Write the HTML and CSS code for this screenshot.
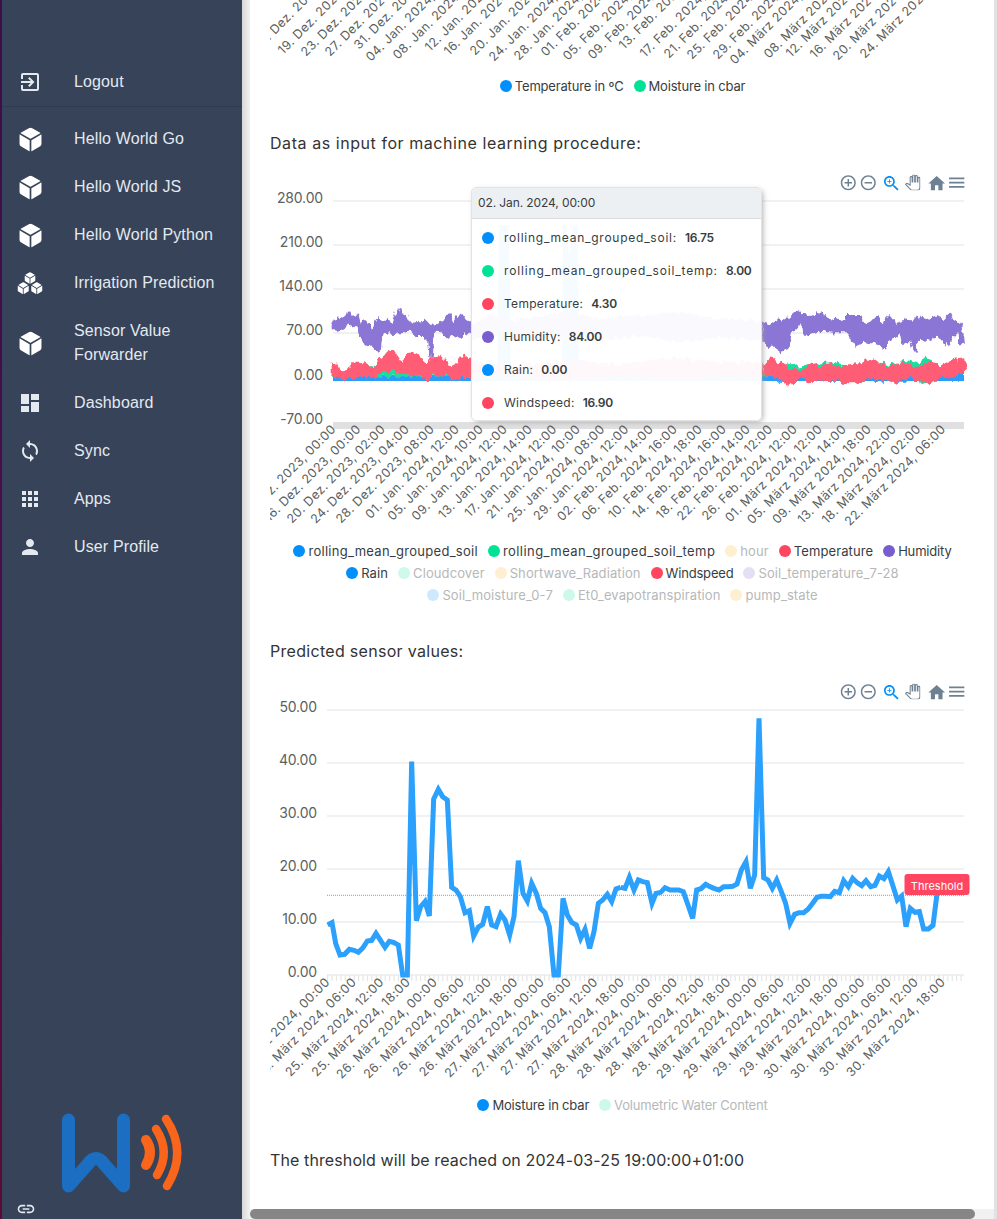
FILE: index.html
```html
<!DOCTYPE html>
<html>
<head>
  <title>Irrigation Prediction</title>
  <link rel="stylesheet" href="styles.css">
</head>
<body>
  <svg class="icon-defs" xmlns="http://www.w3.org/2000/svg">
    <symbol id="i-cube" viewBox="0 0 512 512"><path d="M440.9 136.3a4 4 0 000-6.91L288.16 40.65a64.14 64.14 0 00-64.33 0L71.12 129.39a4 4 0 000 6.91L254 243.88a4 4 0 004.06 0zM54 163.51a4 4 0 00-6 3.49v173.89a48 48 0 0023.84 41.39L234 479.51a4 4 0 006-3.46V274.3a4 4 0 00-2-3.46zM272 275v201a4 4 0 006 3.46l162.15-97.23A48 48 0 00464 340.89V167a4 4 0 00-6-3.45l-184 108a4 4 0 00-2 3.45z"/></symbol>
    <symbol id="t-plus" viewBox="0 0 24 24"><path d="M13 7h-2v4H7v2h4v4h2v-4h4v-2h-4V7zm-1-5C6.48 2 2 6.48 2 12s4.48 10 10 10 10-4.48 10-10S17.52 2 12 2zm0 18c-4.41 0-8-3.59-8-8s3.59-8 8-8 8 3.59 8 8-3.59 8-8 8z"/></symbol>
    <symbol id="t-minus" viewBox="0 0 24 24"><path d="M7 11v2h10v-2H7zm5-9C6.48 2 2 6.48 2 12s4.48 10 10 10 10-4.48 10-10S17.52 2 12 2zm0 18c-4.41 0-8-3.59-8-8s3.59-8 8-8 8 3.59 8 8-3.59 8-8 8z"/></symbol>
    <symbol id="t-lens" viewBox="0 0 24 24"><path d="M15.5 14h-.79l-.28-.27C15.41 12.59 16 11.11 16 9.5 16 5.91 13.09 3 9.5 3S3 5.91 3 9.5 5.91 16 9.5 16c1.61 0 3.09-.59 4.23-1.57l.27.28v.79l5 4.99L20.49 19l-4.99-5zm-6 0C7.01 14 5 11.99 5 9.5S7.01 5 9.5 5 14 7.01 14 9.5 11.99 14 9.5 14z"/><path d="M12 10h-2v2H9v-2H7V9h2V7h1v2h2v1z"/></symbol>
    <symbol id="t-hand" viewBox="0 0 24 24"><path class="hand" d="M23 5.5V20c0 2.2-1.8 4-4 4h-7.3c-1.08 0-2.1-.43-2.85-1.19L1 14.83s1.26-1.23 1.3-1.25c.22-.19.49-.29.79-.29.22 0 .42.06.6.16.04.01 4.31 2.46 4.31 2.46V4c0-.83.67-1.5 1.5-1.5S11 3.17 11 4v7h1V1.5c0-.83.67-1.5 1.5-1.5S15 .67 15 1.5V11h1V2.5c0-.83.67-1.5 1.5-1.5s1.5.67 1.5 1.5V11h1V5.5c0-.83.67-1.5 1.5-1.5s1.5.67 1.5 1.5z"/></symbol>
    <symbol id="t-home" viewBox="0 0 24 24"><path d="M10 20v-6h4v6h5v-8h3L12 3 2 12h3v8z"/></symbol>
    <symbol id="t-menu" viewBox="0 0 24 24"><path d="M3 18h18v-2H3v2zm0-5h18v-2H3v2zm0-7v2h18V6H3z"/></symbol>
    <g id="chart-toolbar" class="toolbar">
      <use href="#t-plus" x="839.3" y="173.7" width="18" height="18"/>
      <use href="#t-minus" x="859.3" y="173.7" width="18" height="18"/>
      <use href="#t-lens" class="toolbar-active" x="881.5" y="173.5" width="20" height="20"/>
      <use href="#t-hand" x="905" y="174.8" width="15.5" height="15.5"/>
      <use href="#t-home" x="926.7" y="173.5" width="20" height="20"/>
      <use href="#t-menu" x="946.5" y="172.5" width="20.4" height="20.4"/>
    </g>
  </svg>

  <div class="page">
    <div class="rail"></div>

    <aside class="sidebar">
      <nav class="nav-top">
        <a class="nav-item">
          <span class="nav-icon"><svg width="24" height="24" viewBox="0 0 24 24"><path d="M10.09 15.59L11.5 17l5-5-5-5-1.41 1.41L12.67 11H3v2h9.67l-2.58 2.59zM19 3H5c-1.11 0-2 .9-2 2v4h2V5h14v14H5v-4H3v4c0 1.1.89 2 2 2h14c1.1 0 2-.9 2-2V5c0-1.1-.9-2-2-2z"/></svg></span>
          <span class="nav-label">Logout</span>
        </a>
      </nav>
      <nav class="nav-list">
        <a class="nav-item">
          <span class="nav-icon cube"><svg width="27" height="27"><use href="#i-cube"/></svg></span>
          <span class="nav-label">Hello World Go</span>
        </a>
        <a class="nav-item">
          <span class="nav-icon cube"><svg width="27" height="27"><use href="#i-cube"/></svg></span>
          <span class="nav-label">Hello World JS</span>
        </a>
        <a class="nav-item">
          <span class="nav-icon cube"><svg width="27" height="27"><use href="#i-cube"/></svg></span>
          <span class="nav-label">Hello World Python</span>
        </a>
        <a class="nav-item">
          <span class="nav-icon cube"><svg width="26" height="22" viewBox="0 0 26 22"><use href="#i-cube" x="6.5" y="-.5" width="13" height="13"/><use href="#i-cube" x="-.5" y="9.5" width="13.5" height="13.5"/><use href="#i-cube" x="13" y="9.5" width="13.5" height="13.5"/></svg></span>
          <span class="nav-label">Irrigation Prediction</span>
        </a>
        <a class="nav-item">
          <span class="nav-icon cube"><svg width="27" height="27"><use href="#i-cube"/></svg></span>
          <span class="nav-label">Sensor Value Forwarder</span>
        </a>
        <a class="nav-item">
          <span class="nav-icon"><svg width="24" height="24" viewBox="0 0 24 24"><path d="M3 13h8V3H3v10zm0 8h8v-6H3v6zm10 0h8V11h-8v10zm0-18v6h8V3h-8z"/></svg></span>
          <span class="nav-label">Dashboard</span>
        </a>
        <a class="nav-item">
          <span class="nav-icon"><svg width="24" height="24" viewBox="0 0 24 24"><path d="M12 4V1L8 5l4 4V6c3.31 0 6 2.69 6 6 0 1.01-.25 1.97-.7 2.8l1.46 1.46C19.54 15.03 20 13.57 20 12c0-4.42-3.58-8-8-8zm0 14c-3.31 0-6-2.69-6-6 0-1.01.25-1.97.7-2.8L5.24 7.74C4.46 8.97 4 10.43 4 12c0 4.42 3.58 8 8 8v3l4-4-4-4v3z"/></svg></span>
          <span class="nav-label">Sync</span>
        </a>
        <a class="nav-item">
          <span class="nav-icon"><svg width="24" height="24" viewBox="0 0 24 24"><path d="M4 8h4V4H4v4zm6 12h4v-4h-4v4zm-6 0h4v-4H4v4zm0-6h4v-4H4v4zm6 0h4v-4h-4v4zm6-10v4h4V4h-4zm-6 4h4V4h-4v4zm6 6h4v-4h-4v4zm0 6h4v-4h-4v4z"/></svg></span>
          <span class="nav-label">Apps</span>
        </a>
        <a class="nav-item">
          <span class="nav-icon"><svg width="24" height="24" viewBox="0 0 24 24"><path d="M12 12c2.21 0 4-1.79 4-4s-1.79-4-4-4-4 1.79-4 4 1.79 4 4 4zm0 2c-2.67 0-8 1.34-8 4v2h16v-2c0-2.66-5.33-4-8-4z"/></svg></span>
          <span class="nav-label">User Profile</span>
        </a>
      </nav>

      <div class="side-foot">
        <svg class="logo" width="126" height="80" viewBox="0 0 126 80">
          <path class="logo-w" d="M7.5 7V73L27 51Q35 40 43 51L62.5 73V7"/>
          <path class="logo-wave" d="M85 27Q93 39 85 52" stroke-width="10"/>
          <path class="logo-wave" d="M95 16Q110 39 96 62" stroke-width="8.5"/>
          <path class="logo-wave" d="M105 6Q127 39 106 73" stroke-width="8.5"/>
        </svg>
        <svg class="link-icon" width="20" height="20" viewBox="0 0 24 24"><path d="M3.9 12c0-1.71 1.39-3.1 3.1-3.1h4V7H7c-2.76 0-5 2.24-5 5s2.24 5 5 5h4v-1.9H7c-1.71 0-3.1-1.39-3.1-3.1zM8 13h8v-2H8v2zm9-6h-4v1.9h4c1.71 0 3.1 1.39 3.1 3.1s-1.39 3.1-3.1 3.1h-4V17h4c2.76 0 5-2.24 5-5s-2.24-5-5-5z"/></svg>
      </div>
    </aside>

    <div class="gutter"></div>

    <main class="main">
      <div class="content">
        <!-- first chart, scrolled so only the end of its axis shows -->
        <svg class="chart" width="705" height="70" viewBox="270 0 705 70">
          <g class="x-labels">
            <text transform="translate(260 50) rotate(-45)">15. Dez. 2023, 00:00</text>
            <text transform="translate(283 55) rotate(-45)">19. Dez. 2023, 00:00</text>
            <text transform="translate(306 57) rotate(-45)">23. Dez. 2023, 00:00</text>
            <text transform="translate(330 57) rotate(-45)">27. Dez. 2023, 00:00</text>
            <text transform="translate(359 50) rotate(-45)">31. Dez. 2023, 00:00</text>
            <text transform="translate(371 62) rotate(-45)">04. Jan. 2024, 00:00</text>
            <text transform="translate(398 60) rotate(-45)">08. Jan. 2024, 00:00</text>
            <text transform="translate(430 52) rotate(-45)">12. Jan. 2024, 00:00</text>
            <text transform="translate(449 56) rotate(-45)">16. Jan. 2024, 00:00</text>
            <text transform="translate(475 56) rotate(-45)">20. Jan. 2024, 00:00</text>
            <text transform="translate(494 62) rotate(-45)">24. Jan. 2024, 00:00</text>
            <text transform="translate(519 61) rotate(-45)">28. Jan. 2024, 00:00</text>
            <text transform="translate(546 57) rotate(-45)">01. Feb. 2024, 00:00</text>
            <text transform="translate(568 61) rotate(-45)">05. Feb. 2024, 00:00</text>
            <text transform="translate(593 60) rotate(-45)">09. Feb. 2024, 00:00</text>
            <text transform="translate(624 50) rotate(-45)">13. Feb. 2024, 00:00</text>
            <text transform="translate(645 58) rotate(-45)">17. Feb. 2024, 00:00</text>
            <text transform="translate(669 59) rotate(-45)">21. Feb. 2024, 00:00</text>
            <text transform="translate(692 60) rotate(-45)">25. Feb. 2024, 00:00</text>
            <text transform="translate(718 60) rotate(-45)">29. Feb. 2024, 00:00</text>
            <text transform="translate(735 65) rotate(-45)">04. März 2024, 00:00</text>
            <text transform="translate(769 59) rotate(-45)">08. März 2024, 00:00</text>
            <text transform="translate(791 58) rotate(-45)">12. März 2024, 00:00</text>
            <text transform="translate(815 59) rotate(-45)">16. März 2024, 00:00</text>
            <text transform="translate(838 61) rotate(-45)">20. März 2024, 00:00</text>
            <text transform="translate(865 59) rotate(-45)">24. März 2024, 00:00</text>
          </g>
        </svg>
        <div class="legend legend-gap">
          <div class="legend-row">
            <span class="legend-item tight"><i class="dot blue"></i>Temperature in ºC</span>
            <span class="legend-item tight"><i class="dot green"></i>Moisture in cbar</span>
          </div>
        </div>

        <h2 class="chart-title title-first">Data as input for machine learning procedure:</h2>
        <div class="chart-box">
          <svg class="chart" width="705" height="375" viewBox="270 165 705 375">
            <defs>
              <filter id="jag" x="-2%" y="-10%" width="104%" height="120%">
                <feTurbulence type="fractalNoise" baseFrequency=".22 .08" numOctaves="2" seed="4"/>
                <feDisplacementMap in="SourceGraphic" scale="9" xChannelSelector="G" yChannelSelector="R"/>
              </filter>
            </defs>
            <use href="#chart-toolbar"/>
            <g class="grid">
              <line x1="333" y1="201" x2="964" y2="201"/>
              <line x1="333" y1="245" x2="964" y2="245"/>
              <line x1="333" y1="289" x2="964" y2="289"/>
              <line x1="333" y1="333" x2="964" y2="333"/>
              <line x1="333" y1="377" x2="964" y2="377"/>
            </g>
            <line class="axis-solid" x1="333" y1="425.5" x2="964" y2="425.5"/>
            <g class="y-labels">
              <text x="323" y="203">280.00</text>
              <text x="323" y="247">210.00</text>
              <text x="323" y="291">140.00</text>
              <text x="323" y="335">70.00</text>
              <text x="323" y="380">0.00</text>
              <text x="323" y="424">-70.00</text>
            </g>
            <!-- series traced from the plot, drawn in 3x units -->
            <rect class="s-blue" x="333" y="375" width="631" height="6"/>
            <polygon class="s-blue" points="497,377 499,225 509,225 511,377"/>
            <polygon class="s-blue" points="562,377 563,225 567,225 569,260 573,225 578,225 579,377"/>
            <g filter="url(#jag)">
              <polygon class="s-purple" points="470,325 490,315 520,320 560,312 600,318 640,315 680,312 720,318 762,322 762,340 720,338 680,342 640,336 600,340 560,338 520,342 490,336 470,340"/>
              <polygon class="s-red" points="470,362 520,366 570,360 620,364 670,358 720,362 762,362 762,378 720,376 670,380 620,376 570,381 520,376 470,378"/>
              <g transform="translate(260 170) scale(.33333)">
                <polygon class="s-green" points="215,610 330,585 350,590 410,600 480,600 540,590 634,595 634,620 215,620"/>
                <polygon class="s-purple" points="215,465 228,437 240,442 255,432 270,424 280,440 298,430 305,455 322,450 335,490 355,435 370,445 395,455 413,412 425,435 440,428 455,458 470,455 485,462 500,450 515,465 530,462 548,450 568,432 580,460 600,430 615,450 634,465 634,497 615,490 600,505 585,495 565,505 545,490 525,488 520,500 515,562 508,565 505,515 490,498 470,498 450,480 425,488 405,492 390,490 368,492 362,545 345,542 325,520 300,500 290,470 270,465 250,475 230,482 215,478"/>
                <polygon class="s-red" points="215,575 228,578 235,600 255,595 270,590 285,575 300,575 320,585 345,590 355,575 370,552 385,548 400,538 415,560 425,575 445,552 465,550 485,562 500,585 515,560 535,552 555,570 570,590 590,580 610,552 634,570 634,620 600,622 575,632 560,615 540,622 515,615 500,638 485,615 460,618 440,612 420,612 395,605 370,605 345,622 320,622 295,622 265,620 258,638 240,625 215,618"/>
              </g>
              <g transform="translate(620 170) scale(.33333)">
                <polygon class="s-blue" points="427,615 900,615 930,590 960,585 1032,580 1032,632 427,632"/>
                <polygon class="s-green" points="427,600 500,585 510,578 530,590 640,575 660,582 690,590 790,578 830,585 850,570 870,572 890,580 900,570 918,560 940,570 940,600 920,640 900,645 890,620 427,620"/>
                <polygon class="s-purple" points="427,455 445,465 470,445 490,455 510,440 530,422 550,428 565,438 585,435 605,422 625,440 650,445 670,460 675,435 720,435 735,460 770,442 785,460 805,432 830,462 860,448 880,455 897,430 915,450 945,438 970,450 992,428 1005,458 1025,458 1038,518 1020,520 1015,490 990,510 975,530 950,500 920,515 895,512 890,550 870,520 845,522 840,490 815,510 800,540 775,525 735,515 705,530 680,490 640,490 600,482 570,497 550,497 545,460 515,490 510,520 490,548 465,530 440,530 427,510"/>
                <polygon class="s-red" points="427,580 440,575 458,560 470,580 485,572 500,590 530,600 560,595 580,580 600,592 630,575 650,590 690,582 720,580 760,565 780,580 820,590 850,575 880,590 905,590 930,572 960,585 1000,570 1032,565 1038,600 1020,610 990,625 950,630 925,640 890,635 860,620 815,640 780,625 745,625 700,640 680,640 640,630 605,635 565,640 540,625 505,648 480,625 450,620 427,615"/>
              </g>
            </g>
            <g class="x-labels end">
              <text transform="translate(336.6 430) rotate(-45)">12. Dez. 2023, 00:00</text>
              <text transform="translate(361.5 430) rotate(-45)">16. Dez. 2023, 00:00</text>
              <text transform="translate(386 430) rotate(-45)">20. Dez. 2023, 02:00</text>
              <text transform="translate(410 430) rotate(-45)">24. Dez. 2023, 04:00</text>
              <text transform="translate(435 430) rotate(-45)">28. Dez. 2023, 08:00</text>
              <text transform="translate(460 430) rotate(-45)">01. Jan. 2024, 12:00</text>
              <text transform="translate(484 430) rotate(-45)">05. Jan. 2024, 10:00</text>
              <text transform="translate(508 430) rotate(-45)">09. Jan. 2024, 12:00</text>
              <text transform="translate(533 430) rotate(-45)">13. Jan. 2024, 14:00</text>
              <text transform="translate(557.6 430) rotate(-45)">17. Jan. 2024, 12:00</text>
              <text transform="translate(581 430) rotate(-45)">21. Jan. 2024, 10:00</text>
              <text transform="translate(605.5 430) rotate(-45)">25. Jan. 2024, 08:00</text>
              <text transform="translate(629.5 430) rotate(-45)">29. Jan. 2024, 12:00</text>
              <text transform="translate(654 430) rotate(-45)">02. Feb. 2024, 14:00</text>
              <text transform="translate(678 430) rotate(-45)">06. Feb. 2024, 16:00</text>
              <text transform="translate(703 430) rotate(-45)">10. Feb. 2024, 18:00</text>
              <text transform="translate(727 430) rotate(-45)">14. Feb. 2024, 16:00</text>
              <text transform="translate(751 430) rotate(-45)">18. Feb. 2024, 14:00</text>
              <text transform="translate(773.4 430) rotate(-45)">22. Feb. 2024, 12:00</text>
              <text transform="translate(798 430) rotate(-45)">26. Feb. 2024, 12:00</text>
              <text transform="translate(823 430) rotate(-45)">01. März 2024, 12:00</text>
              <text transform="translate(847 430) rotate(-45)">05. März 2024, 14:00</text>
              <text transform="translate(872 430) rotate(-45)">09. März 2024, 18:00</text>
              <text transform="translate(897 430) rotate(-45)">13. März 2024, 22:00</text>
              <text transform="translate(921.5 430) rotate(-45)">18. März 2024, 02:00</text>
              <text transform="translate(946.4 430) rotate(-45)">22. März 2024, 06:00</text>
            </g>
          </svg>

          <div class="tooltip">
            <div class="tooltip-title">02. Jan. 2024, 00:00</div>
            <div class="tooltip-body">
              <div class="tooltip-row wide"><i class="dot big blue"></i><span>rolling_mean_grouped_soil:</span><b>16.75</b></div>
              <div class="tooltip-row wider"><i class="dot big green"></i><span>rolling_mean_grouped_soil_temp:</span><b>8.00</b></div>
              <div class="tooltip-row"><i class="dot big red"></i><span>Temperature:</span><b>4.30</b></div>
              <div class="tooltip-row"><i class="dot big purple"></i><span>Humidity:</span><b>84.00</b></div>
              <div class="tooltip-row"><i class="dot big blue"></i><span>Rain:</span><b>0.00</b></div>
              <div class="tooltip-row"><i class="dot big red"></i><span>Windspeed:</span><b>16.90</b></div>
            </div>
          </div>
        </div>
        <div class="legend">
          <div class="legend-row">
            <span class="legend-item wide"><i class="dot blue"></i>rolling_mean_grouped_soil</span>
            <span class="legend-item wider"><i class="dot green"></i>rolling_mean_grouped_soil_temp</span>
            <span class="legend-item off"><i class="dot amber"></i>hour</span>
            <span class="legend-item"><i class="dot red"></i>Temperature</span>
            <span class="legend-item tight"><i class="dot purple"></i>Humidity</span>
          </div>
          <div class="legend-row">
            <span class="legend-item"><i class="dot blue"></i>Rain</span>
            <span class="legend-item off"><i class="dot green"></i>Cloudcover</span>
            <span class="legend-item off"><i class="dot amber"></i>Shortwave_Radiation</span>
            <span class="legend-item tight"><i class="dot red"></i>Windspeed</span>
            <span class="legend-item off"><i class="dot purple"></i>Soil_temperature_7-28</span>
          </div>
          <div class="legend-row">
            <span class="legend-item off"><i class="dot blue"></i>Soil_moisture_0-7</span>
            <span class="legend-item off"><i class="dot green"></i>Et0_evapotranspiration</span>
            <span class="legend-item off"><i class="dot amber"></i>pump_state</span>
          </div>
        </div>

        <h2 class="chart-title title-second">Predicted sensor values:</h2>
        <svg class="chart" width="705" height="419" viewBox="270 675 705 419">
          <use href="#chart-toolbar" y="509"/>
          <g class="grid">
            <line x1="327" y1="710" x2="964" y2="710"/>
            <line x1="327" y1="763" x2="964" y2="763"/>
            <line x1="327" y1="816" x2="964" y2="816"/>
            <line x1="327" y1="869" x2="964" y2="869"/>
            <line x1="327" y1="922" x2="964" y2="922"/>
            <line x1="327" y1="975" x2="964" y2="975"/>
          </g>
          <line class="axis-ticks" x1="327" y1="978" x2="964" y2="978"/>
          <g class="y-labels">
            <text x="317" y="712">50.00</text>
            <text x="317" y="765">40.00</text>
            <text x="317" y="818">30.00</text>
            <text x="317" y="871">20.00</text>
            <text x="317" y="924">10.00</text>
            <text x="317" y="977">0.00</text>
          </g>
          <line class="threshold-line" x1="327" y1="895.3" x2="964" y2="895.3"/>
          <g transform="translate(260 690) scale(.33333)">
            <polyline class="series-line" points="203,705 216,698 227,760 240,795 254,793 268,778 282,781 295,787 309,773 322,753 335,751 348,730 362,752 375,772 388,754 402,758 415,765 428,855 442,855 455,215 469,692 482,650 495,635 508,678 521,327 535,298 548,320 562,330 575,592 588,600 601,620 615,668 628,662 641,738 655,711 668,703 682,650 695,705 708,710 722,672 735,690 749,735 762,680 775,512 789,610 802,633 815,580 829,610 842,655 855,668 868,710 882,855 895,855 909,625 922,675 935,697 949,705 962,745 975,718 989,775 1002,725 1015,640 1028,630 1042,613 1055,635 1068,597 1082,592"/>
          </g>
          <g transform="translate(620 690) scale(.33333)">
            <polyline class="series-line" points="2,592 15,595 28,562 42,600 55,570 68,575 82,578 96,640 108,610 122,607 135,593 150,600 163,600 176,600 190,605 204,645 218,685 230,600 243,596 257,583 270,590 284,596 297,600 311,590 324,590 338,589 351,582 364,540 378,515 391,595 404,555 417,85 431,563 444,570 457,595 470,570 484,605 497,640 510,700 524,673 537,668 551,668 564,658 578,640 591,622 604,619 617,619 631,620 644,604 658,608 671,572 685,590 698,565 711,578 725,587 738,572 752,590 765,586 778,558 792,566 805,545 818,585 832,630 845,618 858,710 871,655 885,667 898,665 911,717 925,717 939,706 950,620 955,570"/>
          </g>
          <g class="threshold-label">
            <rect x="904.5" y="874" width="65" height="21" rx="3"/>
            <text x="937" y="890">Threshold</text>
          </g>
          <g class="x-labels end">
            <text transform="translate(330.5 983) rotate(-45)">25. März 2024, 00:00</text>
            <text transform="translate(357 983) rotate(-45)">25. März 2024, 06:00</text>
            <text transform="translate(384.6 983) rotate(-45)">25. März 2024, 12:00</text>
            <text transform="translate(411 983) rotate(-45)">25. März 2024, 18:00</text>
            <text transform="translate(438 983) rotate(-45)">26. März 2024, 00:00</text>
            <text transform="translate(465 983) rotate(-45)">26. März 2024, 06:00</text>
            <text transform="translate(492 983) rotate(-45)">26. März 2024, 12:00</text>
            <text transform="translate(518.6 983) rotate(-45)">26. März 2024, 18:00</text>
            <text transform="translate(545 983) rotate(-45)">27. März 2024, 00:00</text>
            <text transform="translate(572 983) rotate(-45)">27. März 2024, 06:00</text>
            <text transform="translate(598.5 983) rotate(-45)">27. März 2024, 12:00</text>
            <text transform="translate(625 983) rotate(-45)">27. März 2024, 18:00</text>
            <text transform="translate(651.6 983) rotate(-45)">28. März 2024, 00:00</text>
            <text transform="translate(678.4 983) rotate(-45)">28. März 2024, 06:00</text>
            <text transform="translate(705 983) rotate(-45)">28. März 2024, 12:00</text>
            <text transform="translate(731.6 983) rotate(-45)">28. März 2024, 18:00</text>
            <text transform="translate(758 983) rotate(-45)">29. März 2024, 00:00</text>
            <text transform="translate(785 983) rotate(-45)">29. März 2024, 06:00</text>
            <text transform="translate(812 983) rotate(-45)">29. März 2024, 12:00</text>
            <text transform="translate(839 983) rotate(-45)">29. März 2024, 18:00</text>
            <text transform="translate(865.5 983) rotate(-45)">30. März 2024, 00:00</text>
            <text transform="translate(892 983) rotate(-45)">30. März 2024, 06:00</text>
            <text transform="translate(919 983) rotate(-45)">30. März 2024, 12:00</text>
            <text transform="translate(946 983) rotate(-45)">30. März 2024, 18:00</text>
          </g>
        </svg>
        <div class="legend">
          <div class="legend-row">
            <span class="legend-item tight"><i class="dot blue"></i>Moisture in cbar</span>
            <span class="legend-item tight off"><i class="dot green"></i>Volumetric Water Content</span>
          </div>
        </div>

        <p class="result">The threshold will be reached on 2024-03-25 19:00:00+01:00</p>
      </div>

      <div class="hscroll"><div class="hscroll-thumb"></div></div>
    </main>

    <div class="edge"></div>
  </div>
</body>
</html>
```

FILE: styles.css
```css
body {
  margin: 0;
  font-family: "Inter", "Liberation Sans", sans-serif;
  color: #373d3f;
  background: #fff;
}

.icon-defs {
  display: none;
}

.page {
  display: flex;
  height: 1219px;
  overflow: hidden;
}

.rail {
  width: 2px;
  background: linear-gradient(#3a1046, #4a0d4a 50%, #5c0a35);
}

/* sidebar */
.sidebar {
  width: 240px;
  display: flex;
  flex-direction: column;
  background: #364359;
  font-family: "Liberation Sans", Arial, sans-serif;
}

.nav-top {
  padding-top: 58px;
  border-bottom: 1px solid #2f3b50;
}

.nav-list {
  padding-top: 8px;
}

.nav-item {
  display: flex;
  align-items: center;
  padding: 12px 0 12px 14px;
  color: #e4e9f0;
  font-size: 16px;
  line-height: 24px;
  letter-spacing: .13px;
}

.nav-icon {
  width: 28px;
  display: flex;
  justify-content: center;
  margin-right: 30px;
  fill: #e4e9f0;
}

.nav-icon svg {
  margin: -4px 0;
}

.nav-icon.cube {
  fill: #fff;
}

.nav-label {
  max-width: 150px;
}

.side-foot {
  margin-top: auto;
  padding: 0 0 0 59px;
  display: flex;
  flex-direction: column;
}

.logo {
  fill: none;
  stroke-linecap: round;
  stroke-linejoin: round;
}

.logo-w {
  stroke: #1b6ec2;
  stroke-width: 13;
}

.logo-wave {
  stroke: #f9651a;
}

.link-icon {
  fill: #e4e9f0;
  margin: 6px 0 0 -45px;
}

.gutter {
  width: 8px;
  background: linear-gradient(90deg, #d8d8d8, #f2f2f2);
}

.edge {
  width: 3px;
  background: #e2e2e2;
}

/* main column */
.main {
  flex: 1;
  position: relative;
  background: #fff;
}

.content {
  width: 705px;
  margin-left: 20px;
}

.chart {
  display: block;
  overflow: hidden;
}

.chart-box {
  position: relative;
}

.chart-title {
  margin: 0 0 10px;
  font-size: 16px;
  font-weight: 400;
  line-height: 24px;
  color: #333;
}

.title-first {
  margin-top: 34px;
  letter-spacing: .56px;
}

.title-second {
  margin-top: 33px;
  margin-bottom: 12px;
  letter-spacing: .3px;
}

.result {
  margin: 32px 0 0;
  font-size: 16px;
  line-height: 24px;
  letter-spacing: .11px;
  color: #333;
}

/* chart parts */
.grid line {
  stroke: #ececec;
  stroke-width: 1.6;
}

.axis-solid {
  stroke: #e0e0e0;
  stroke-width: 7;
}

.axis-ticks {
  stroke: #e6e6e6;
  stroke-width: 6;
  stroke-dasharray: 1.2 3.23;
}

.y-labels text {
  font-size: 14px;
  fill: #5b5f61;
  text-anchor: end;
  letter-spacing: -.15px;
}

.x-labels text {
  font-size: 12.5px;
  fill: #5b5f61;
  letter-spacing: .4px;
}

.x-labels.end text {
  text-anchor: end;
}

.s-blue {
  fill: #2a9dfb;
}

.s-green {
  fill: #1fdda0;
}

.s-purple {
  fill: #8b76d6;
}

.s-red {
  fill: #ff5d74;
}

.series-line {
  fill: none;
  stroke: #2ba0fc;
  stroke-width: 15;
}

.threshold-line {
  stroke: #ff4560;
  stroke-width: 1;
  stroke-dasharray: 1 1;
  opacity: .8;
}

.threshold-label rect {
  fill: #ff4560;
}

.threshold-label text {
  fill: #fff;
  font-size: 11px;
  text-anchor: middle;
}

.toolbar use {
  fill: #6e8192;
}

.toolbar use.toolbar-active {
  fill: #008ffb;
}

.hand {
  fill: none;
  stroke: #6e8192;
  stroke-width: 1.6;
}

/* tooltip sits over the plot */
.tooltip {
  position: absolute;
  left: 201px;
  top: 22px;
  width: 291px;
  height: 234px;
  box-sizing: border-box;
  border: 1px solid #e3e3e3;
  border-radius: 5px;
  background: rgba(255, 255, 255, .96);
  box-shadow: 2px 2px 6px -2px #999;
  font-size: 12px;
  overflow: hidden;
}

.tooltip-title {
  height: 30px;
  line-height: 30px;
  padding-left: 6px;
  letter-spacing: -.1px;
  background: rgba(236, 239, 241, .96);
  border-bottom: 1px solid #ddd;
}

.tooltip-body {
  padding-top: 2px;
}

.tooltip-row {
  display: flex;
  align-items: center;
  height: 33px;
  padding-left: 10px;
  letter-spacing: .3px;
}

.tooltip-row.wide {
  letter-spacing: .75px;
}

.tooltip-row.wider {
  letter-spacing: .85px;
}

.tooltip-row b {
  margin-left: 8px;
  font-weight: 600;
  letter-spacing: -.3px;
}

/* legends */
.legend-row {
  display: flex;
  justify-content: center;
  column-gap: 10px;
  height: 22px;
  align-items: center;
}

.legend-gap {
  padding-top: 5px;
}

.legend-item {
  display: flex;
  align-items: center;
  font-size: 13px;
  letter-spacing: .1px;
  color: #373d3f;
}

.legend-item.wide {
  letter-spacing: .28px;
}

.legend-item.wider {
  letter-spacing: .43px;
}

.legend-item.tight {
  letter-spacing: -.18px;
}

.legend-item.off {
  color: #b6b8b9;
}

.legend-item.off .dot {
  opacity: .2;
}

.dot {
  display: block;
  width: 12px;
  height: 12px;
  margin-right: 3px;
  border-radius: 50%;
}

.dot.big {
  margin-right: 10px;
}

.blue {
  background: #008ffb;
}

.green {
  background: #00e396;
}

.amber {
  background: #feb019;
}

.red {
  background: #ff4560;
}

.purple {
  background: #775dd0;
}

/* horizontal scrollbar of the content */
.hscroll {
  position: absolute;
  left: 0;
  right: 0;
  bottom: 0;
  height: 10px;
  background: #f1f1f1;
}

.hscroll-thumb {
  width: 725px;
  height: 10px;
  border-radius: 8px;
  background: #868686;
}
```
